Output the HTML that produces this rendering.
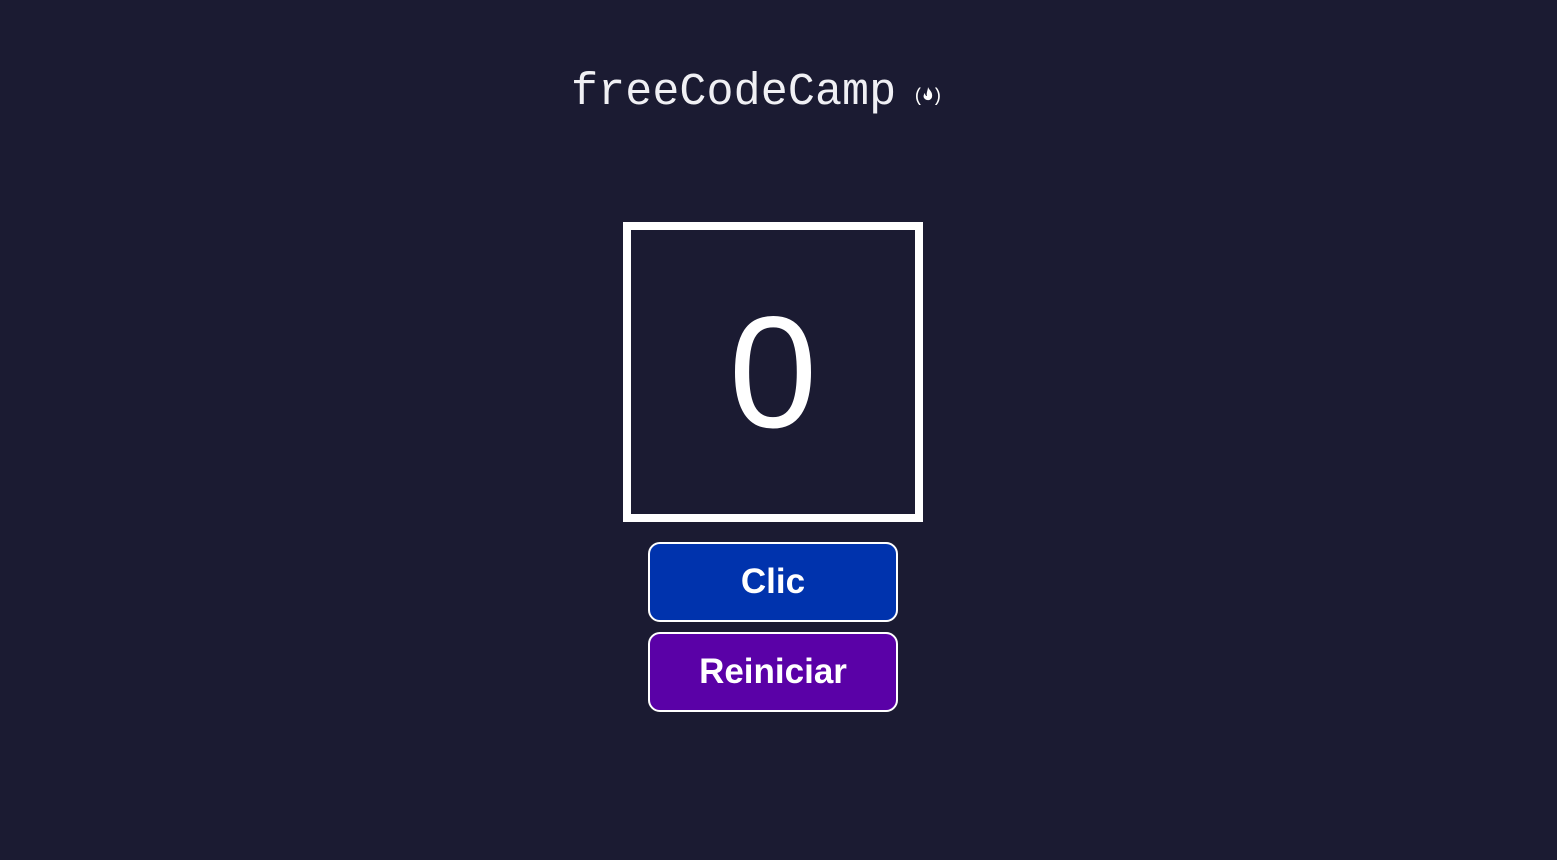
<!DOCTYPE html>
<html><head><meta charset="utf-8"><style>
html,body{margin:0;padding:0;background:#1b1b32;width:1557px;height:860px;overflow:hidden;font-family:"Liberation Sans",sans-serif;color:#fff}
.logo{position:absolute;left:571px;top:63px;font-family:"Liberation Mono",monospace;font-size:45px;line-height:60px;white-space:nowrap;letter-spacing:0.1px;color:#f0f0f4}
.icon{position:absolute;left:913px;top:84px}
.box{position:absolute;left:623px;top:222px;width:284px;height:284px;border:8px solid #fff;text-align:center;font-size:159px;line-height:284px}
.btn{position:absolute;left:648px;width:246px;height:76px;border:2px solid #fff;border-radius:12px;text-align:center;font-weight:bold;font-size:35px;line-height:76px}
</style></head><body>
<div class="logo">freeCodeCamp</div>
<svg class="icon" width="30" height="22" viewBox="0 0 30 22"><text x="0" y="17" font-family="Liberation Mono" font-size="18" fill="#fff">(</text><text x="19" y="17" font-family="Liberation Mono" font-size="18" fill="#fff">)</text><path d="M15 3c1 3 5 5 4 10-1 4-6 4-8 1-1-2 0-4 1-5 0 2 1 3 2 3-1-3 1-6 1-9z" fill="#fff"/></svg>
<div class="box">0</div>
<div class="btn" style="top:542px;background:#0033ad">Clic</div>
<div class="btn" style="top:632px;background:#5a01a7">Reiniciar</div>
</body></html>
